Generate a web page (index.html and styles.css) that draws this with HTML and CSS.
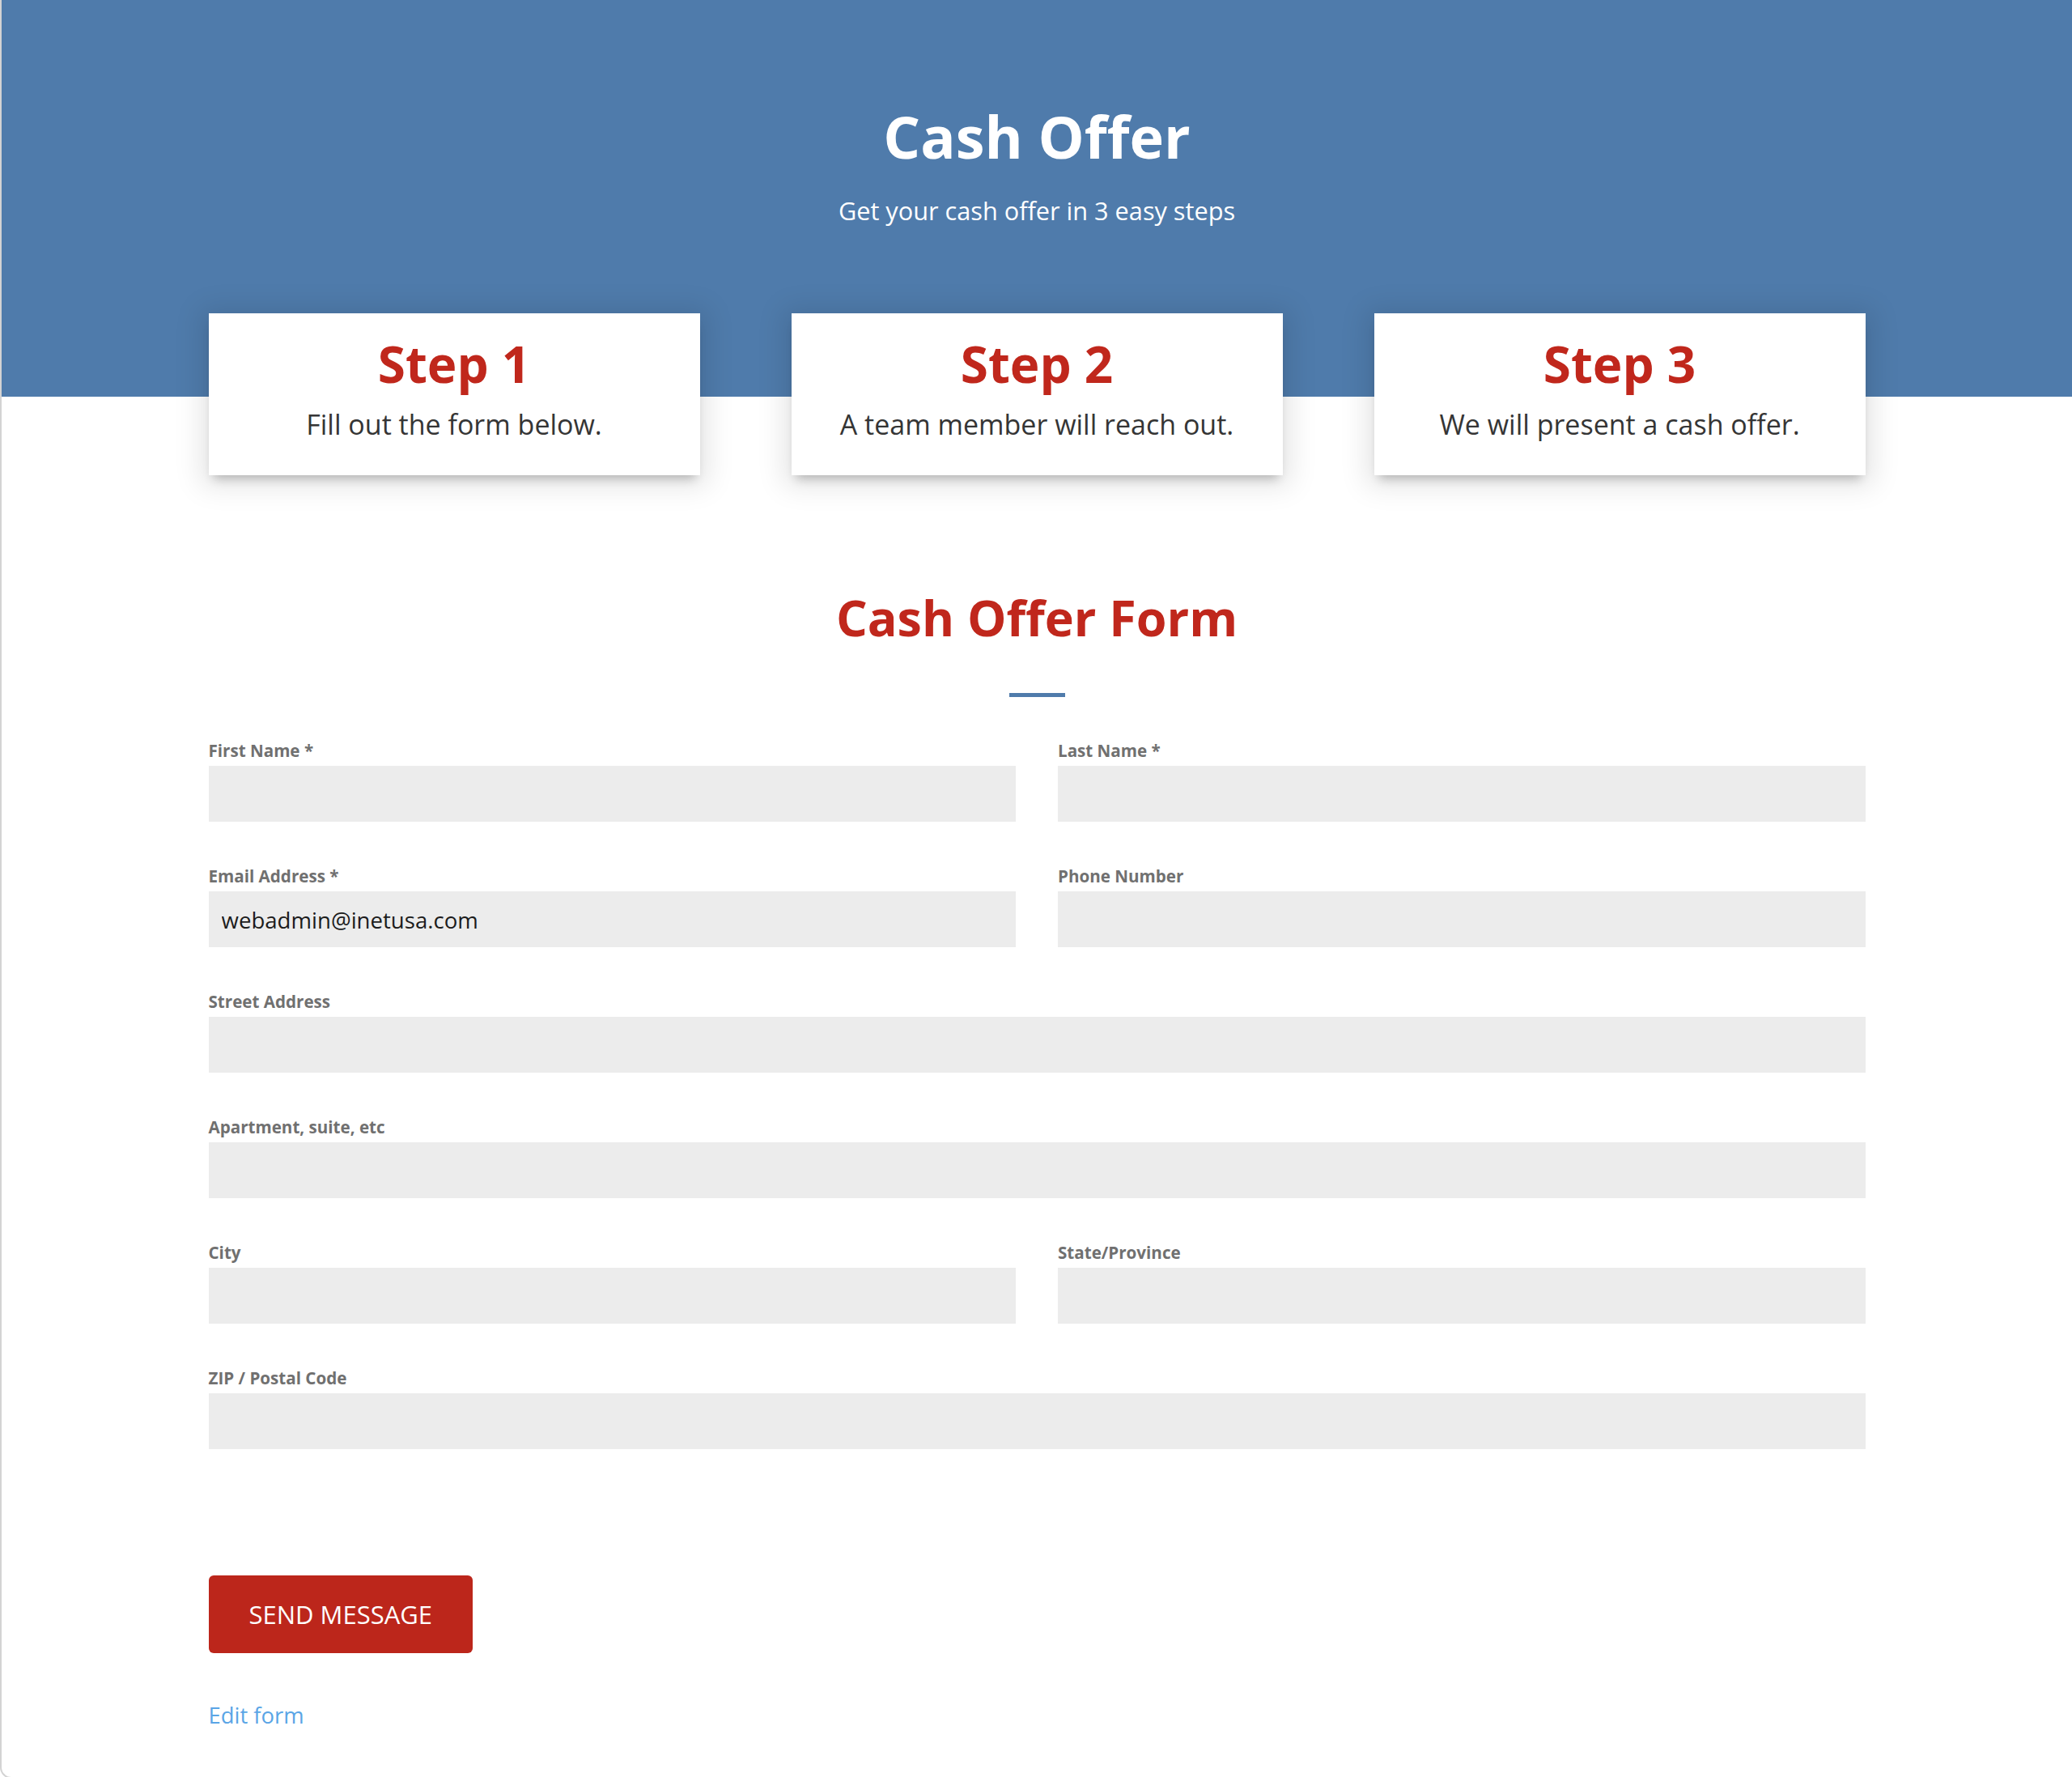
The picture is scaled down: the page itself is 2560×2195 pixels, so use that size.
FILE: index.html
```html
<!DOCTYPE html>
<html lang="en">
<head>
<meta charset="utf-8">
<title>Cash Offer</title>
<link rel="stylesheet" href="styles.css">
</head>
<body>
<div class="page">
  <section class="hero">
    <h1 class="hero-title">Cash Offer</h1>
    <p class="hero-sub">Get your cash offer in 3 easy steps</p>
    <div class="steps">
      <div class="step">
        <h2 class="step-title">Step 1</h2>
        <p class="step-text">Fill out the form below.</p>
      </div>
      <div class="step">
        <h2 class="step-title">Step 2</h2>
        <p class="step-text">A team member will reach out.</p>
      </div>
      <div class="step">
        <h2 class="step-title">Step 3</h2>
        <p class="step-text">We will present a cash offer.</p>
      </div>
    </div>
  </section>

  <section class="form-section">
    <h2 class="form-title">Cash Offer Form</h2>
    <div class="divider"></div>
    <form class="form">
      <div class="field">
        <label class="label">First Name *</label>
        <input class="input" type="text">
      </div>
      <div class="field">
        <label class="label">Last Name *</label>
        <input class="input" type="text">
      </div>
      <div class="field">
        <label class="label">Email Address *</label>
        <input class="input" type="text" value="webadmin@inetusa.com">
      </div>
      <div class="field">
        <label class="label">Phone Number</label>
        <input class="input" type="text">
      </div>
      <div class="field full">
        <label class="label">Street Address</label>
        <input class="input" type="text">
      </div>
      <div class="field full">
        <label class="label">Apartment, suite, etc</label>
        <input class="input" type="text">
      </div>
      <div class="field">
        <label class="label">City</label>
        <input class="input" type="text">
      </div>
      <div class="field">
        <label class="label">State/Province</label>
        <input class="input" type="text">
      </div>
      <div class="field full">
        <label class="label">ZIP / Postal Code</label>
        <input class="input" type="text">
      </div>
    </form>
    <button class="send" type="button">SEND MESSAGE</button>
    <a class="edit" href="#">Edit form</a>
  </section>
</div>
</body>
</html>
```

FILE: styles.css
```css
* {
  box-sizing: border-box;
}

html, body {
  margin: 0;
  padding: 0;
  background: #ffffff;
}

body {
  font-family: "Open Sans", "Noto Sans", "Liberation Sans", sans-serif;
  color: #333333;
  overflow: hidden;
}

.page {
  height: 2197px;
  border-left: 2px solid #d3d3d3;
  border-bottom: 2px solid #d3d3d3;
  border-bottom-left-radius: 14px;
  overflow: hidden;
}

.hero {
  background: linear-gradient(to bottom, #4f7bab 0, #4f7bab 490px, #ffffff 490px);
  padding-top: 123px;
  display: flex;
  flex-direction: column;
  align-items: center;
}

.hero-title {
  margin: 0;
  font-size: 72px;
  line-height: 90px;
  font-weight: 700;
  color: #ffffff;
}

.hero-sub {
  margin: 26px 0 0;
  font-size: 30.7px;
  line-height: 42px;
  font-weight: 400;
  color: #ffffff;
}

.steps {
  margin-top: 106px;
  width: 2047px;
  display: grid;
  grid-template-columns: repeat(3, 1fr);
  column-gap: 113px;
}

.step {
  background: #ffffff;
  height: 200px;
  padding-top: 25px;
  text-align: center;
  box-shadow: 0 10px 12px -6px rgba(0, 0, 0, 0.24), 0 4px 32px 10px rgba(0, 0, 0, 0.1);
}

.step-title {
  margin: 0;
  font-size: 62px;
  line-height: 74px;
  font-weight: 700;
  color: #c0271c;
}

.step-text {
  margin: 13px 0 0;
  font-size: 34px;
  line-height: 50px;
  color: #353535;
}

.form-section {
  width: 2047px;
  margin: 0 auto;
  padding-top: 138px;
  display: flex;
  flex-direction: column;
}

.form-title {
  margin: 0;
  text-align: center;
  font-size: 61px;
  line-height: 76px;
  font-weight: 700;
  color: #c0271c;
}

.divider {
  align-self: center;
  width: 69px;
  height: 5px;
  margin-top: 55px;
  background: #4f7bab;
}

.form {
  margin-top: 51px;
  display: grid;
  grid-template-columns: 1fr 1fr;
  column-gap: 52px;
  row-gap: 52px;
}

.field {
  display: flex;
  flex-direction: column;
}

.field.full {
  grid-column: 1 / -1;
}

.label {
  font-size: 20.6px;
  line-height: 30px;
  font-weight: 700;
  color: #707070;
  margin-bottom: 4px;
}

.input {
  height: 69px;
  border: none;
  outline: none;
  background: #ececec;
  padding: 0 16px;
  font-family: "Open Sans", "Noto Sans", "Liberation Sans", sans-serif;
  font-size: 27.6px;
  color: #1c1c1c;
}

.send {
  align-self: flex-start;
  margin-top: 156px;
  height: 96px;
  padding: 0 50px;
  border: none;
  border-radius: 6px;
  background: #bc261b;
  color: #ffffff;
  font-family: "Open Sans", "Noto Sans", "Liberation Sans", sans-serif;
  font-size: 31px;
  font-weight: 400;
  cursor: pointer;
}

.edit {
  align-self: flex-start;
  margin-top: 57px;
  font-size: 27.4px;
  line-height: 40px;
  color: #5aa5e6;
  text-decoration: none;
}
```
